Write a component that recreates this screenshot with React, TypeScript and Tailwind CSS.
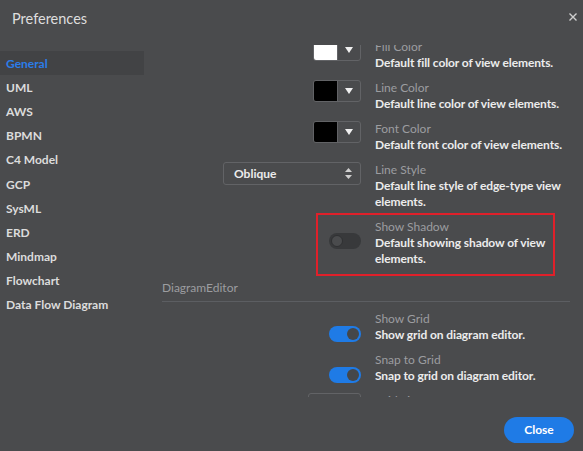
import React from 'react';

const font = { fontFamily: 'Lato, "Noto Sans", sans-serif' };

const categories = [
  'General',
  'UML',
  'AWS',
  'BPMN',
  'C4 Model',
  'GCP',
  'SysML',
  'ERD',
  'Mindmap',
  'Flowchart',
  'Data Flow Diagram',
];

function ColorPicker({ color }: { color: string }) {
  return (
    <div className="flex h-[22px] w-[48px] overflow-hidden rounded-[3px] border border-[#626366]">
      <div className="w-[23px]" style={{ background: color }} />
      <div className="flex flex-1 items-center justify-center border-l border-[#626366]">
        <svg width="8" height="6" viewBox="0 0 8 6">
          <path d="M0 0 L8 0 L4 6 Z" fill="#f0f0f0" />
        </svg>
      </div>
    </div>
  );
}

function Toggle({ on }: { on: boolean }) {
  return on ? (
    <div className="mt-[15px] flex h-4 w-8 items-center justify-end rounded-full bg-[#1f7be6] pr-[2px]">
      <div className="h-3 w-3 rounded-full bg-[#45474a]" />
    </div>
  ) : (
    <div className="mt-[14px] flex h-4 w-8 items-center rounded-full bg-[#38393b] pl-[2px]">
      <div className="h-3 w-3 rounded-full border border-[#2f3032] bg-[#4a4b4d]" />
    </div>
  );
}

function Row({
  label,
  desc,
  control,
  marked,
}: {
  label: string;
  desc: React.ReactNode;
  control: React.ReactNode;
  marked?: boolean;
}) {
  return (
    <div className="relative flex gap-[14px]">
      <div className="flex w-[199px] shrink-0 justify-end">{control}</div>
      <div className="flex-1 text-[12px] leading-4">
        <div className="text-[#9c9da0]">{label}</div>
        <div className="font-bold tracking-[-0.1px] text-[#ececec]">{desc}</div>
      </div>
      {marked && (
        <div className="pointer-events-none absolute -top-[6px] -bottom-[9px] left-[154px] right-[15px] border-2 border-[#e0202a]" />
      )}
    </div>
  );
}

function SectionHeader({ title }: { title: string }) {
  return (
    <div className="mb-[9px] border-b border-[#5c5e62] pb-[5px] text-[12px] leading-4 text-[#9c9da0]">
      {title}
    </div>
  );
}

export default function App() {
  return (
    <div
      className="relative flex h-[451px] w-[583px] flex-col overflow-hidden bg-[#4a4b4d]"
      style={font}
    >
      {/* Header */}
      <div className="flex h-[51px] shrink-0 items-start justify-between">
        <h1 className="mt-[10px] ml-[12px] text-[14.5px] leading-[18px] text-[#dedede]">Preferences</h1>
        <button className="mt-[11px] mr-[4px] p-[2px]">
          <svg width="8" height="8" viewBox="0 0 8 8">
            <path d="M0.5 0.5 L7.5 7.5 M7.5 0.5 L0.5 7.5" stroke="#cfcfcf" strokeWidth="1.4" />
          </svg>
        </button>
      </div>

      <div className="flex flex-1">
        {/* Sidebar */}
        <div className="w-[144px] shrink-0">
          {categories.map((c, i) => (
            <div
              key={c}
              className={`flex h-[24.2px] items-center pl-[6px] pt-[1px] text-[12px] font-bold ${
                i === 0 ? 'bg-[#424345] text-[#2b7de9]' : 'text-[#dcdcdc]'
              }`}
            >
              {c}
            </div>
          ))}
        </div>

        {/* Content */}
        <div className="relative ml-[18px] mr-[13px] flex-1">
          <div className="-mt-[6px] h-[352px] overflow-hidden">
            <div className="-mt-[37px] flex flex-col">
              <SectionHeader title="View" />
              <div className="flex flex-col gap-[9px]">
                <Row label="Fill Color" desc="Default fill color of view elements." control={<ColorPicker color="#ffffff" />} />
                <Row label="Line Color" desc="Default line color of view elements." control={<ColorPicker color="#000000" />} />
                <Row label="Font Color" desc="Default font color of view elements." control={<ColorPicker color="#000000" />} />
                <Row
                  label="Line Style"
                  desc="Default line style of edge-type view elements."
                  control={
                    <div className="flex h-[23px] w-[138px] items-center justify-between rounded-[3px] border border-[#626366] pl-[10px] pr-[8px] text-[12px] font-bold text-[#ececec]">
                      <span>Oblique</span>
                      <svg width="7" height="11" viewBox="0 0 7 11">
                        <path d="M0 4 L3.5 0 L7 4 Z M0 7 L3.5 11 L7 7 Z" fill="#cfcfcf" />
                      </svg>
                    </div>
                  }
                />
                <Row label="Show Shadow" desc="Default showing shadow of view elements." control={<Toggle on={false} />} marked />
              </div>

              <div className="mt-[13px]">
                <SectionHeader title="DiagramEditor" />
                <div className="flex flex-col gap-[9px]">
                  <Row label="Show Grid" desc="Show grid on diagram editor." control={<Toggle on />} />
                  <Row label="Snap to Grid" desc="Snap to grid on diagram editor." control={<Toggle on />} />
                  <Row
                    label="Grid Size"
                    desc="Size of grid."
                    control={<div className="h-[23px] w-[53px] rounded-[3px] border border-[#626366]" />}
                  />
                </div>
              </div>
            </div>
          </div>
        </div>
      </div>

      {/* Footer */}
      <div className="flex h-[54px] shrink-0 items-start justify-end pr-[9px] pt-[20px]">
        <button className="h-[26px] w-[70px] rounded-full bg-[#1f7be6] text-[12px] font-bold text-white">
          Close
        </button>
      </div>
    </div>
  );
}
